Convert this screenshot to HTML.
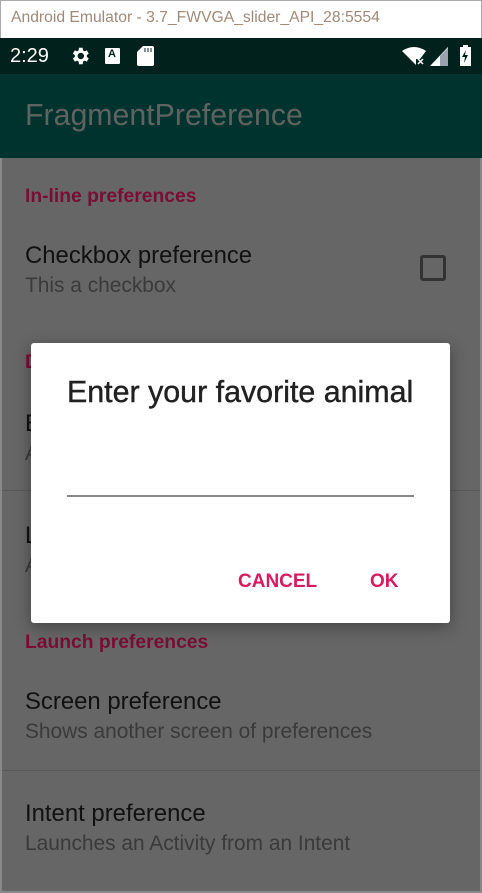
<!DOCTYPE html>
<html><head><meta charset="utf-8"><style>
*{margin:0;padding:0;box-sizing:border-box}
body{width:482px;height:893px;overflow:hidden;background:#666;font-family:"Liberation Sans",Roboto,sans-serif;position:relative}
.t{position:absolute;white-space:nowrap}
.h{font-size:19.3px;font-weight:bold;color:#7a0d34}
.p{font-size:23.9px;color:#111}
.s{font-size:20.9px;color:#3a3a3a}
</style></head><body>
<div style="position:absolute;left:0;top:0;width:482px;height:38px;background:#fff;border:1px solid #aaa;border-bottom:none"></div>
<div class="t" style="left:11px;top:9px;font-size:15.7px;color:#a08a7a">Android Emulator - 3.7_FWVGA_slider_API_28:5554</div>
<div style="position:absolute;left:0;top:38px;width:482px;height:36px;background:#01221c"></div>
<div class="t" style="left:10px;top:45px;font-size:20px;color:#fff">2:29</div>
<svg style="position:absolute;left:69px;top:45px" width="22" height="22" viewBox="0 0 24 24"><path fill="#fff" d="M19.4 13a7.8 7.8 0 0 0 0-2l2.1-1.6-2-3.5-2.5 1a7.6 7.6 0 0 0-1.7-1L14.9 3h-4l-.4 2.9a7.6 7.6 0 0 0-1.7 1l-2.5-1-2 3.5L6.4 11a7.8 7.8 0 0 0 0 2l-2.1 1.6 2 3.5 2.5-1a7.6 7.6 0 0 0 1.7 1l.4 2.9h4l.4-2.9a7.6 7.6 0 0 0 1.7-1l2.5 1 2-3.5zM12.9 15.5a3.5 3.5 0 1 1 0-7 3.5 3.5 0 0 1 0 7z"/></svg>
<div style="position:absolute;left:105px;top:48px;width:15px;height:16px;background:#fff;border-radius:1px"></div>
<div class="t" style="left:108px;top:48px;font-size:11px;font-weight:bold;color:#01221c">A</div>
<svg style="position:absolute;left:137px;top:46px" width="17" height="20" viewBox="0 0 17 20"><path fill="#fff" d="M6 0h9a2 2 0 0 1 2 2v16a2 2 0 0 1-2 2H2a2 2 0 0 1-2-2V6z"/><path stroke="#01221c" stroke-width="1" d="M8 2v4M11 2v4M14 2v4"/></svg>
<svg style="position:absolute;left:402px;top:47px" width="24" height="18" viewBox="0 0 24 18"><path fill="#fff" d="M0 4Q12-4 24 4L18 12H14V18Z"/><path stroke="#fff" stroke-width="1.5" d="M16 12l5 5M21 12l-5 5"/></svg>
<svg style="position:absolute;left:430px;top:47px" width="18" height="19"><path fill="#fff" d="M0 19L18 0V19Z"/><path fill="#567" d="M10 19V9L18 1V19Z" opacity=".6"/></svg>
<svg style="position:absolute;left:459px;top:44px" width="13" height="22"><rect x="1" y="3" width="11" height="19" fill="#fff"/><rect x="4" y="1" width="5" height="3" fill="#fff"/><path fill="#01221c" d="M7 6L3 13h3l-1 6 4-8H6z"/></svg>
<div style="position:absolute;left:0;top:74px;width:482px;height:84px;background:#00332d"></div>
<div class="t" style="left:25px;top:99px;font-size:30.3px;color:#5e6361">FragmentPreference</div>
<div style="position:absolute;left:0;top:158px;width:482px;height:735px;background:#666;border-left:2px solid #888;border-right:2px solid #888;border-bottom:2px solid #888"></div>
<div class="t h" style="left:25px;top:186px">In-line preferences</div>
<div class="t p" style="left:25px;top:242px">Checkbox preference</div>
<div class="t s" style="left:25px;top:274px">This a checkbox</div>
<div style="position:absolute;left:420px;top:255px;width:26px;height:26px;border:3px solid #333;border-radius:3px"></div>
<div class="t h" style="left:25px;top:352px">Dialog preferences</div>
<div class="t p" style="left:25px;top:410px">EditText preference</div>
<div class="t s" style="left:25px;top:442px">An example</div>
<div style="position:absolute;left:2px;top:490px;width:478px;height:1px;background:#5a5a5a"></div>
<div class="t p" style="left:25px;top:522px">List preference</div>
<div class="t s" style="left:25px;top:554px">An example</div>
<div class="t h" style="left:25px;top:632px">Launch preferences</div>
<div class="t p" style="left:25px;top:688px">Screen preference</div>
<div class="t s" style="left:25px;top:720px">Shows another screen of preferences</div>
<div style="position:absolute;left:2px;top:770px;width:478px;height:1px;background:#5a5a5a"></div>
<div class="t p" style="left:25px;top:800px">Intent preference</div>
<div class="t s" style="left:25px;top:832px">Launches an Activity from an Intent</div>
<div style="position:absolute;left:31px;top:343px;width:419px;height:280px;background:#fff;border-radius:3px;box-shadow:0 4px 16px rgba(0,0,0,.35)"></div>
<div class="t" style="left:67px;top:375px;font-size:30.4px;color:#212121;-webkit-text-stroke:0.4px #212121">Enter your favorite animal</div>
<div style="position:absolute;left:67px;top:495px;width:347px;height:2px;background:#888"></div>
<div class="t" style="left:238px;top:571px;font-size:19px;font-weight:bold;color:#d81b60">CANCEL</div>
<div class="t" style="left:370px;top:571px;font-size:19px;font-weight:bold;color:#d81b60">OK</div>
</body></html>
